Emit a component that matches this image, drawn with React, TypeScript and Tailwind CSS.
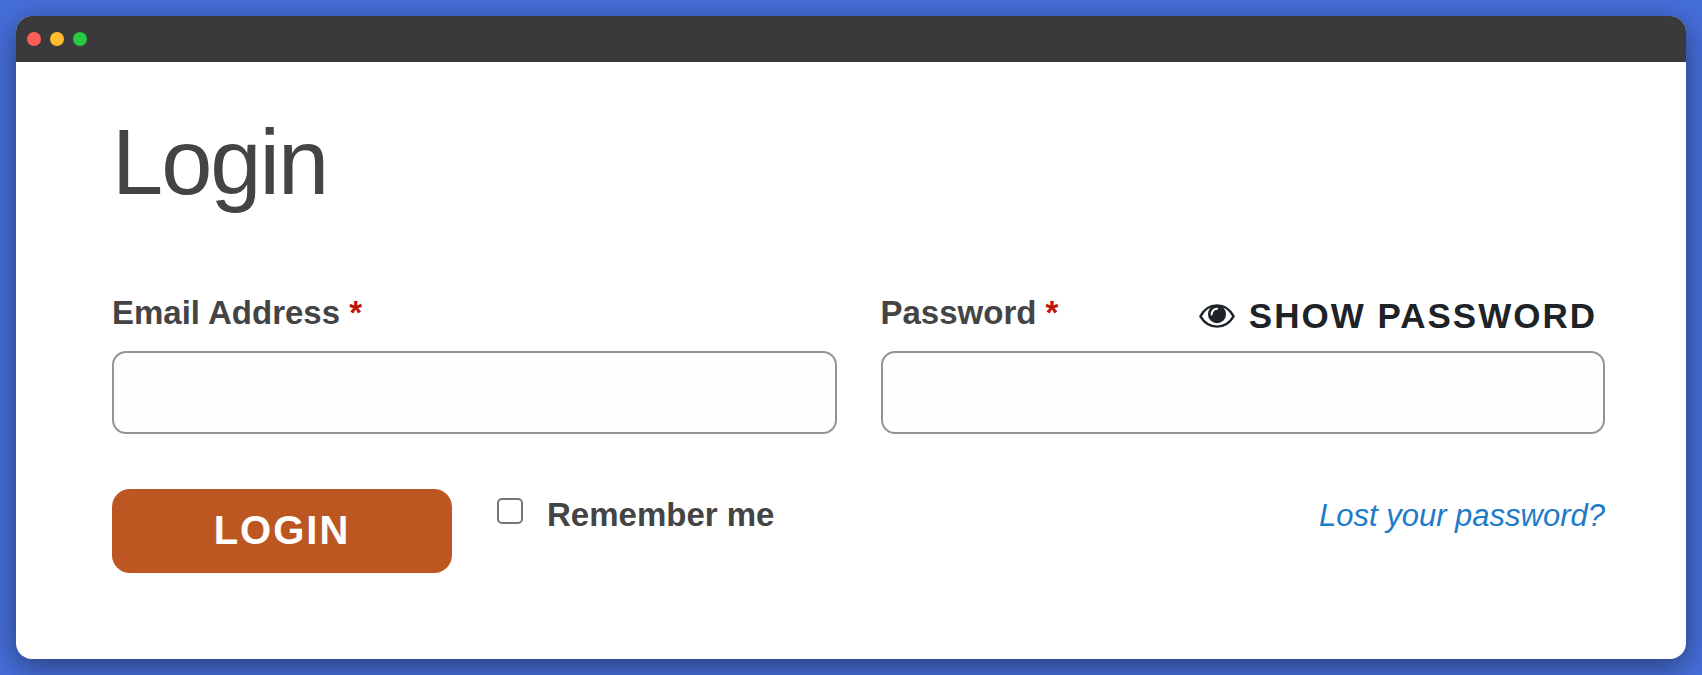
import { useState } from 'react'

function EyeIcon({ className }: { className?: string }) {
  return (
    <svg viewBox="0 0 36 24" fill="none" className={className} aria-hidden="true">
      <path
        d="M1.4 12.4C5.2 5.2 11 1.4 18 1.4s12.8 3.8 16.6 11C30.8 18.8 25 22.6 18 22.6S5.2 18.8 1.4 12.4Z"
        stroke="currentColor"
        strokeWidth="2.4"
        strokeLinejoin="round"
      />
      <circle cx="18" cy="10.2" r="9" fill="currentColor" />
      <path d="M12.6 10.4c0-3.1 2.4-5.6 5.5-5.6" stroke="white" strokeWidth="2" strokeLinecap="round" />
    </svg>
  )
}

function TitleBar() {
  return (
    <div className="flex h-[46px] items-center gap-[9px] bg-[#3a3a3c] px-[11px]">
      <span className="size-3.5 rounded-full bg-[#ff5f57]" />
      <span className="size-3.5 rounded-full bg-[#febc2e]" />
      <span className="size-3.5 rounded-full bg-[#28c840]" />
    </div>
  )
}

function Required() {
  return <span className="text-[#c0150a]">*</span>
}

const inputClass =
  'h-[83px] w-full rounded-[14px] border-2 border-[#949494] bg-[#fefefe] px-6 text-[33px] text-[#444444] outline-none focus:border-[#1e7bc8]'

export default function App() {
  const [showPassword, setShowPassword] = useState(false)

  return (
    <div className="flex min-h-screen flex-col bg-[#466fdb] p-4 font-['Liberation_Sans',Arial,sans-serif] text-[#444444]">
      <main className="flex-1 overflow-hidden rounded-2xl bg-white shadow-[0_8px_32px_rgba(0,0,0,0.45)]">
        <TitleBar />

        <form className="pt-11 pr-[81px] pb-16 pl-24" onSubmit={(e) => e.preventDefault()}>
          <h1 className="text-[92px] leading-[112px] tracking-[-2px]">Login</h1>

          <div className="mt-16 grid grid-cols-2 gap-x-11">
            <div>
              <div className="flex h-[69px] items-start">
                <label htmlFor="email" className="text-[33px] leading-[62px] font-bold">
                  Email Address <Required />
                </label>
              </div>
              <input id="email" type="email" className={inputClass} />
            </div>

            <div>
              <div className="flex h-[69px] items-start justify-between">
                <label htmlFor="password" className="text-[33px] leading-[62px] font-bold">
                  Password <Required />
                </label>
                <button
                  type="button"
                  onClick={() => setShowPassword(!showPassword)}
                  className="flex items-center gap-3.5 pr-2 text-[35px] leading-[68px] font-bold tracking-[2px] text-[#1d2327] uppercase"
                >
                  <EyeIcon className="h-6 w-9" />
                  Show Password
                </button>
              </div>
              <input id="password" type={showPassword ? 'text' : 'password'} className={inputClass} />
            </div>
          </div>

          <div className="mt-[55px] flex items-start">
            <button
              type="submit"
              className="h-[84px] w-[340px] rounded-[18px] bg-[#bd5722] pb-0.5 text-[40px] font-bold tracking-[2px] text-white uppercase"
            >
              Login
            </button>
            <label className="ml-[45px] flex items-start gap-6 text-[33px] leading-[52px] font-bold">
              <input
                type="checkbox"
                className="mt-[9px] size-[26px] appearance-none rounded-[5px] border-2 border-[#767676] bg-white checked:bg-[#1e7bc8]"
              />
              Remember me
            </label>
            <a href="#lost-password" className="ml-auto text-[31px] leading-[54px] text-[#1e7bc8] italic">
              Lost your password?
            </a>
          </div>
        </form>
      </main>
    </div>
  )
}
